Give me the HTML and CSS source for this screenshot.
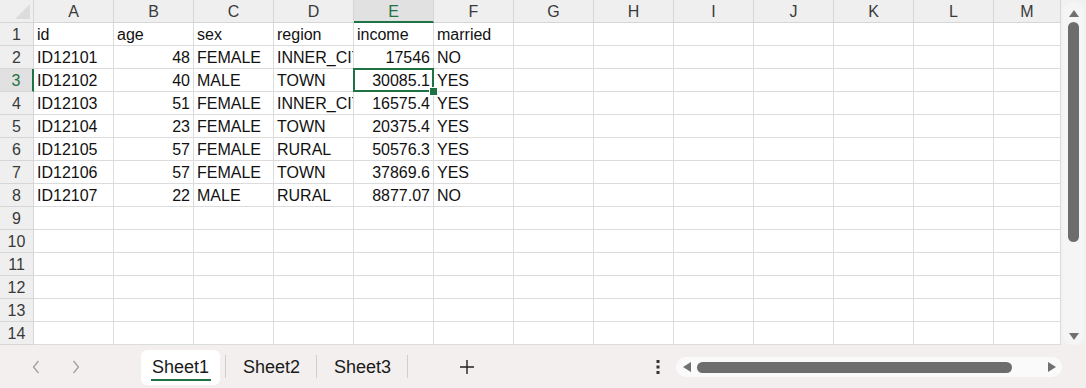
FILE: index.html
```html
<!DOCTYPE html>
<html>
<head>
<meta charset="utf-8">
<link rel="stylesheet" href="styles.css">
</head>
<body>
<div class="app">
  <div class="main">
    <div class="sheet">
      <div class="h corner"><span class="tri"></span></div>
      <div class="h col">A</div><div class="h col">B</div><div class="h col">C</div><div class="h col">D</div><div class="h col act">E</div><div class="h col">F</div><div class="h col">G</div><div class="h col">H</div><div class="h col">I</div><div class="h col">J</div><div class="h col">K</div><div class="h col">L</div><div class="h col">M</div>

      <div class="h rn">1</div><div class="c">id</div><div class="c">age</div><div class="c">sex</div><div class="c">region</div><div class="c">income</div><div class="c">married</div><div class="c"></div><div class="c"></div><div class="c"></div><div class="c"></div><div class="c"></div><div class="c"></div><div class="c"></div>

      <div class="h rn">2</div><div class="c">ID12101</div><div class="c n">48</div><div class="c">FEMALE</div><div class="c">INNER_CITY</div><div class="c n">17546</div><div class="c">NO</div><div class="c"></div><div class="c"></div><div class="c"></div><div class="c"></div><div class="c"></div><div class="c"></div><div class="c"></div>

      <div class="h rn act">3</div><div class="c">ID12102</div><div class="c n">40</div><div class="c">MALE</div><div class="c">TOWN</div><div class="c n sel">30085.1</div><div class="c">YES</div><div class="c"></div><div class="c"></div><div class="c"></div><div class="c"></div><div class="c"></div><div class="c"></div><div class="c"></div>

      <div class="h rn">4</div><div class="c">ID12103</div><div class="c n">51</div><div class="c">FEMALE</div><div class="c">INNER_CITY</div><div class="c n">16575.4</div><div class="c">YES</div><div class="c"></div><div class="c"></div><div class="c"></div><div class="c"></div><div class="c"></div><div class="c"></div><div class="c"></div>

      <div class="h rn">5</div><div class="c">ID12104</div><div class="c n">23</div><div class="c">FEMALE</div><div class="c">TOWN</div><div class="c n">20375.4</div><div class="c">YES</div><div class="c"></div><div class="c"></div><div class="c"></div><div class="c"></div><div class="c"></div><div class="c"></div><div class="c"></div>

      <div class="h rn">6</div><div class="c">ID12105</div><div class="c n">57</div><div class="c">FEMALE</div><div class="c">RURAL</div><div class="c n">50576.3</div><div class="c">YES</div><div class="c"></div><div class="c"></div><div class="c"></div><div class="c"></div><div class="c"></div><div class="c"></div><div class="c"></div>

      <div class="h rn">7</div><div class="c">ID12106</div><div class="c n">57</div><div class="c">FEMALE</div><div class="c">TOWN</div><div class="c n">37869.6</div><div class="c">YES</div><div class="c"></div><div class="c"></div><div class="c"></div><div class="c"></div><div class="c"></div><div class="c"></div><div class="c"></div>

      <div class="h rn">8</div><div class="c">ID12107</div><div class="c n">22</div><div class="c">MALE</div><div class="c">RURAL</div><div class="c n">8877.07</div><div class="c">NO</div><div class="c"></div><div class="c"></div><div class="c"></div><div class="c"></div><div class="c"></div><div class="c"></div><div class="c"></div>

      <div class="h rn">9</div><div class="c"></div><div class="c"></div><div class="c"></div><div class="c"></div><div class="c"></div><div class="c"></div><div class="c"></div><div class="c"></div><div class="c"></div><div class="c"></div><div class="c"></div><div class="c"></div><div class="c"></div>
      <div class="h rn">10</div><div class="c"></div><div class="c"></div><div class="c"></div><div class="c"></div><div class="c"></div><div class="c"></div><div class="c"></div><div class="c"></div><div class="c"></div><div class="c"></div><div class="c"></div><div class="c"></div><div class="c"></div>
      <div class="h rn">11</div><div class="c"></div><div class="c"></div><div class="c"></div><div class="c"></div><div class="c"></div><div class="c"></div><div class="c"></div><div class="c"></div><div class="c"></div><div class="c"></div><div class="c"></div><div class="c"></div><div class="c"></div>
      <div class="h rn">12</div><div class="c"></div><div class="c"></div><div class="c"></div><div class="c"></div><div class="c"></div><div class="c"></div><div class="c"></div><div class="c"></div><div class="c"></div><div class="c"></div><div class="c"></div><div class="c"></div><div class="c"></div>
      <div class="h rn">13</div><div class="c"></div><div class="c"></div><div class="c"></div><div class="c"></div><div class="c"></div><div class="c"></div><div class="c"></div><div class="c"></div><div class="c"></div><div class="c"></div><div class="c"></div><div class="c"></div><div class="c"></div>
      <div class="h rn">14</div><div class="c"></div><div class="c"></div><div class="c"></div><div class="c"></div><div class="c"></div><div class="c"></div><div class="c"></div><div class="c"></div><div class="c"></div><div class="c"></div><div class="c"></div><div class="c"></div><div class="c"></div>
    </div>
    <div class="vscroll">
      <div class="vtrack">
        <svg class="varrow" width="10" height="7" viewBox="0 0 10 7"><path d="M5 0 L10 7 L0 7 Z" fill="#707070"/></svg>
        <div class="vthumb"></div>
        <div class="vspace"></div>
        <svg class="varrow" width="10" height="7" viewBox="0 0 10 7"><path d="M0 0 L10 0 L5 7 Z" fill="#707070"/></svg>
      </div>
    </div>
  </div>
  <div class="tabbar">
    <div class="nav">
      <svg width="8" height="14" viewBox="0 0 8 14"><path d="M6.5 1 L1.5 7 L6.5 13" fill="none" stroke="#a0a0a0" stroke-width="1.3"/></svg>
      <svg width="8" height="14" viewBox="0 0 8 14"><path d="M1.5 1 L6.5 7 L1.5 13" fill="none" stroke="#a0a0a0" stroke-width="1.3"/></svg>
    </div>
    <div class="tabs">
      <div class="tab active"><span class="tabin">Sheet1</span></div>
      <div class="sep"></div>
      <div class="tab"><span class="tabin">Sheet2</span></div>
      <div class="sep"></div>
      <div class="tab"><span class="tabin">Sheet3</span></div>
      <div class="sep"></div>
    </div>
    <div class="add">
      <svg width="16" height="16" viewBox="0 0 16 16"><path d="M8 1 V15 M1 8 H15" stroke="#222" stroke-width="1.4"/></svg>
    </div>
    <div class="more">
      <svg width="4" height="14" viewBox="0 0 4 14"><rect x="0.5" y="0" width="3" height="3" fill="#333"/><rect x="0.5" y="5.5" width="3" height="3" fill="#333"/><rect x="0.5" y="11" width="3" height="3" fill="#333"/></svg>
    </div>
    <div class="hscroll">
      <svg width="8" height="10" viewBox="0 0 8 10"><path d="M0 5 L8 0 L8 10 Z" fill="#707070"/></svg>
      <div class="hthumb"></div>
      <div class="hspace"></div>
      <svg width="8" height="10" viewBox="0 0 8 10"><path d="M8 5 L0 0 L0 10 Z" fill="#707070"/></svg>
    </div>
  </div>
</div>
</body>
</html>
```

FILE: styles.css
```css
* { box-sizing: border-box; }
html, body { margin: 0; padding: 0; }
body {
  width: 1086px;
  height: 388px;
  overflow: hidden;
  font-family: "Liberation Sans", Arial, sans-serif;
  background: #ffffff;
}
.app {
  display: flex;
  flex-direction: column;
  width: 1086px;
  height: 388px;
}
.main {
  display: flex;
  height: 345px;
}
.sheet {
  display: grid;
  grid-template-columns: 34px repeat(12, 80px) 67px;
  grid-auto-rows: 23px;
  width: 1061px;
  background: #ffffff;
}
.c {
  border-right: 1px solid #dcdcdc;
  border-bottom: 1px solid #dcdcdc;
  font-size: 16px;
  line-height: 20px;
  padding: 2px 3px 0 3px;
  color: #111;
  white-space: nowrap;
  overflow: hidden;
}
.c.n { text-align: right; padding-right: 3px; }
.c.sel {
  position: relative;
  overflow: visible;
  z-index: 2;
}
.c.sel::after {
  content: "";
  position: absolute;
  left: -1px;
  top: -1px;
  right: -1px;
  bottom: -1px;
  border: 2px solid #1f7244;
}
.c.sel::before {
  content: "";
  position: absolute;
  right: -5px;
  bottom: -5px;
  width: 7px;
  height: 7px;
  background: #1f7244;
  border: 1px solid #ffffff;
  z-index: 3;
}
.h {
  background: #efefef;
  border-right: 1px solid #d6d6d6;
  border-bottom: 1px solid #d6d6d6;
  color: #3a3a3a;
  font-size: 16px;
  line-height: 20px;
  padding-top: 2px;
  text-align: center;
}
.h.col.act {
  background: #e1e1e1;
  color: #1f7244;
  border-bottom: 2px solid #1f7244;
}
.h.rn.act {
  background: #e1e1e1;
  color: #1f7244;
  border-right: 2px solid #1f7244;
}
.corner {
  position: relative;
}
.tri {
  position: absolute;
  right: 3px;
  bottom: 3px;
  width: 0;
  height: 0;
  border-left: 15px solid transparent;
  border-bottom: 15px solid #dcdcdc;
}
.vscroll {
  width: 25px;
  background: #f1f1f1;
  padding: 2px 2px 0 2px;
}
.vtrack {
  height: 343px;
  background: #f5f5f5;
  border-radius: 10px;
  display: flex;
  flex-direction: column;
  align-items: center;
  padding: 8px 0 5px 0;
}
.varrow { flex: none; }
.vthumb {
  margin-top: 5px;
  width: 11px;
  height: 220px;
  background: #6d6d6d;
  border-radius: 6px;
  flex: none;
}
.vspace { flex: 1; }
.tabbar {
  flex: 1;
  background: #f3efee;
  display: flex;
  align-items: center;
  position: relative;
}
.nav {
  width: 135px;
  display: flex;
  align-items: center;
  gap: 32px;
  padding-left: 32px;
  padding-top: 1px;
}
.tabs {
  display: flex;
  align-items: center;
  height: 43px;
}
.tab {
  width: 90px;
  height: 43px;
  display: flex;
  align-items: center;
  font-size: 18px;
  color: #1a1a1a;
}
.tab .tabin {
  display: flex;
  align-items: center;
  justify-content: center;
  height: 35px;
  width: 79px;
  margin-left: 6px;
  margin-top: 1px;
}
.tab.active .tabin {
  background: #ffffff;
  border-radius: 6px;
  position: relative;
}
.tab.active .tabin::after {
  content: "";
  position: absolute;
  left: 10px;
  right: 9px;
  bottom: 4px;
  height: 2px;
  background: #1f7244;
}
.sep {
  width: 1px;
  height: 23px;
  background: #d2cecd;
}
.add {
  width: 248px;
  display: flex;
  padding-left: 51px;
  align-items: center;
}
.more {
  width: 20px;
  display: flex;
  align-items: center;
}
.hscroll {
  position: absolute;
  left: 676px;
  top: 12px;
  width: 386px;
  height: 20px;
  background: #fbfafa;
  border-radius: 10px;
  display: flex;
  align-items: center;
  padding: 0 6px 0 7px;
}
.hthumb {
  margin-left: 6px;
  width: 315px;
  height: 11px;
  background: #6d6d6d;
  border-radius: 6px;
}
.hspace { flex: 1; }
```
